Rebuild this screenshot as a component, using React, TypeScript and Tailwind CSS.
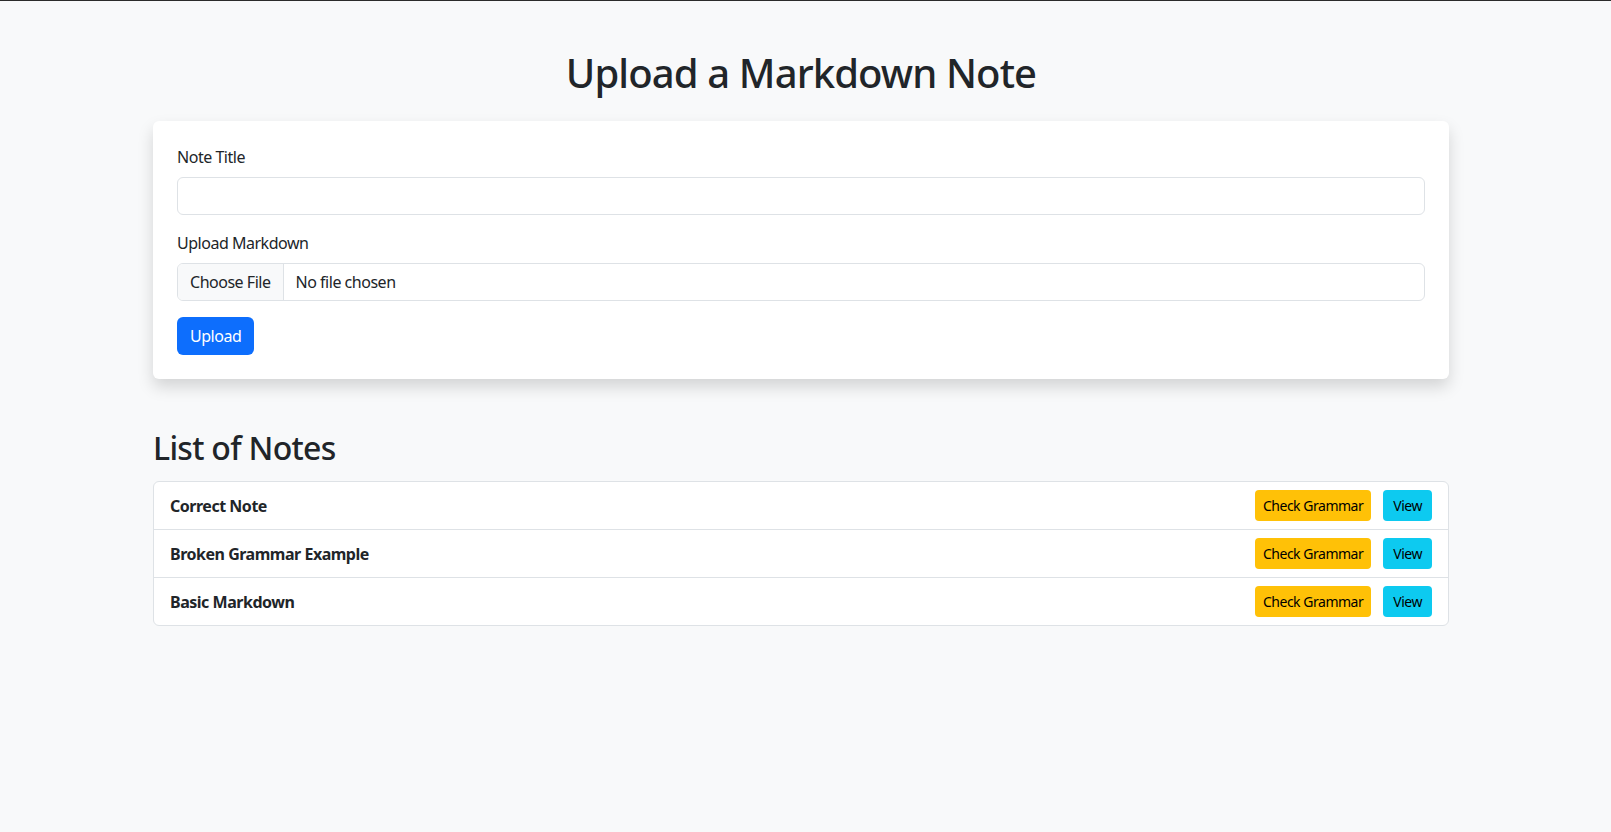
import React from "react";

const notes = ["Correct Note", "Broken Grammar Example", "Basic Markdown"];

export default function App() {
  return (
    <div className="min-h-[832px] bg-[#f8f9fa] border-t border-[#2b2b2b] text-[#212529] font-['Noto_Sans',sans-serif] tracking-[-0.03em]">
      <div className="flex justify-center pr-[9px]">
        <div className="w-[1296px] pt-12">
          <h1 className="text-center text-[40px] leading-[48px] font-medium mb-6 tracking-[-0.022em]">Upload a Markdown Note</h1>
          <div className="bg-white rounded-md shadow-[0_8px_16px_rgba(0,0,0,0.15)] p-6">
            <div className="mb-4">
              <label className="block mb-2 text-base leading-6">Note Title</label>
              <div className="h-[38px] w-full border border-[#dee2e6] rounded-md bg-white" />
            </div>
            <div className="mb-4">
              <label className="block mb-2 text-base leading-6">Upload Markdown</label>
              <div className="flex h-[38px] w-full border border-[#dee2e6] rounded-md overflow-hidden text-base">
                <div className="flex items-center px-3 bg-[#f8f9fa] border-r border-[#dee2e6]">Choose File</div>
                <div className="flex items-center px-3">No file chosen</div>
              </div>
            </div>
            <button className="h-[38px] px-[13px] bg-[#0d6efd] text-white text-base rounded-md">Upload</button>
          </div>
          <h2 className="mt-[50px] mb-[14px] text-[32px] leading-[38px] font-medium tracking-[-0.022em]">List of Notes</h2>
          <div className="bg-white border border-[#dee2e6] rounded-md">
            {notes.map((n, i) => (
              <div
                key={n}
                className={
                  "flex items-center justify-between px-4 py-2 " +
                  (i < notes.length - 1 ? "border-b border-[#dee2e6]" : "")
                }
              >
                <span className="font-bold text-base">{n}</span>
                <div className="flex items-center">
                  <button className="h-[31px] px-2 bg-[#ffc107] text-black text-sm rounded">Check Grammar</button>
                  <button className="h-[31px] px-[10px] ml-3 bg-[#0dcaf0] text-black text-sm rounded">View</button>
                </div>
              </div>
            ))}
          </div>
        </div>
      </div>
    </div>
  );
}
